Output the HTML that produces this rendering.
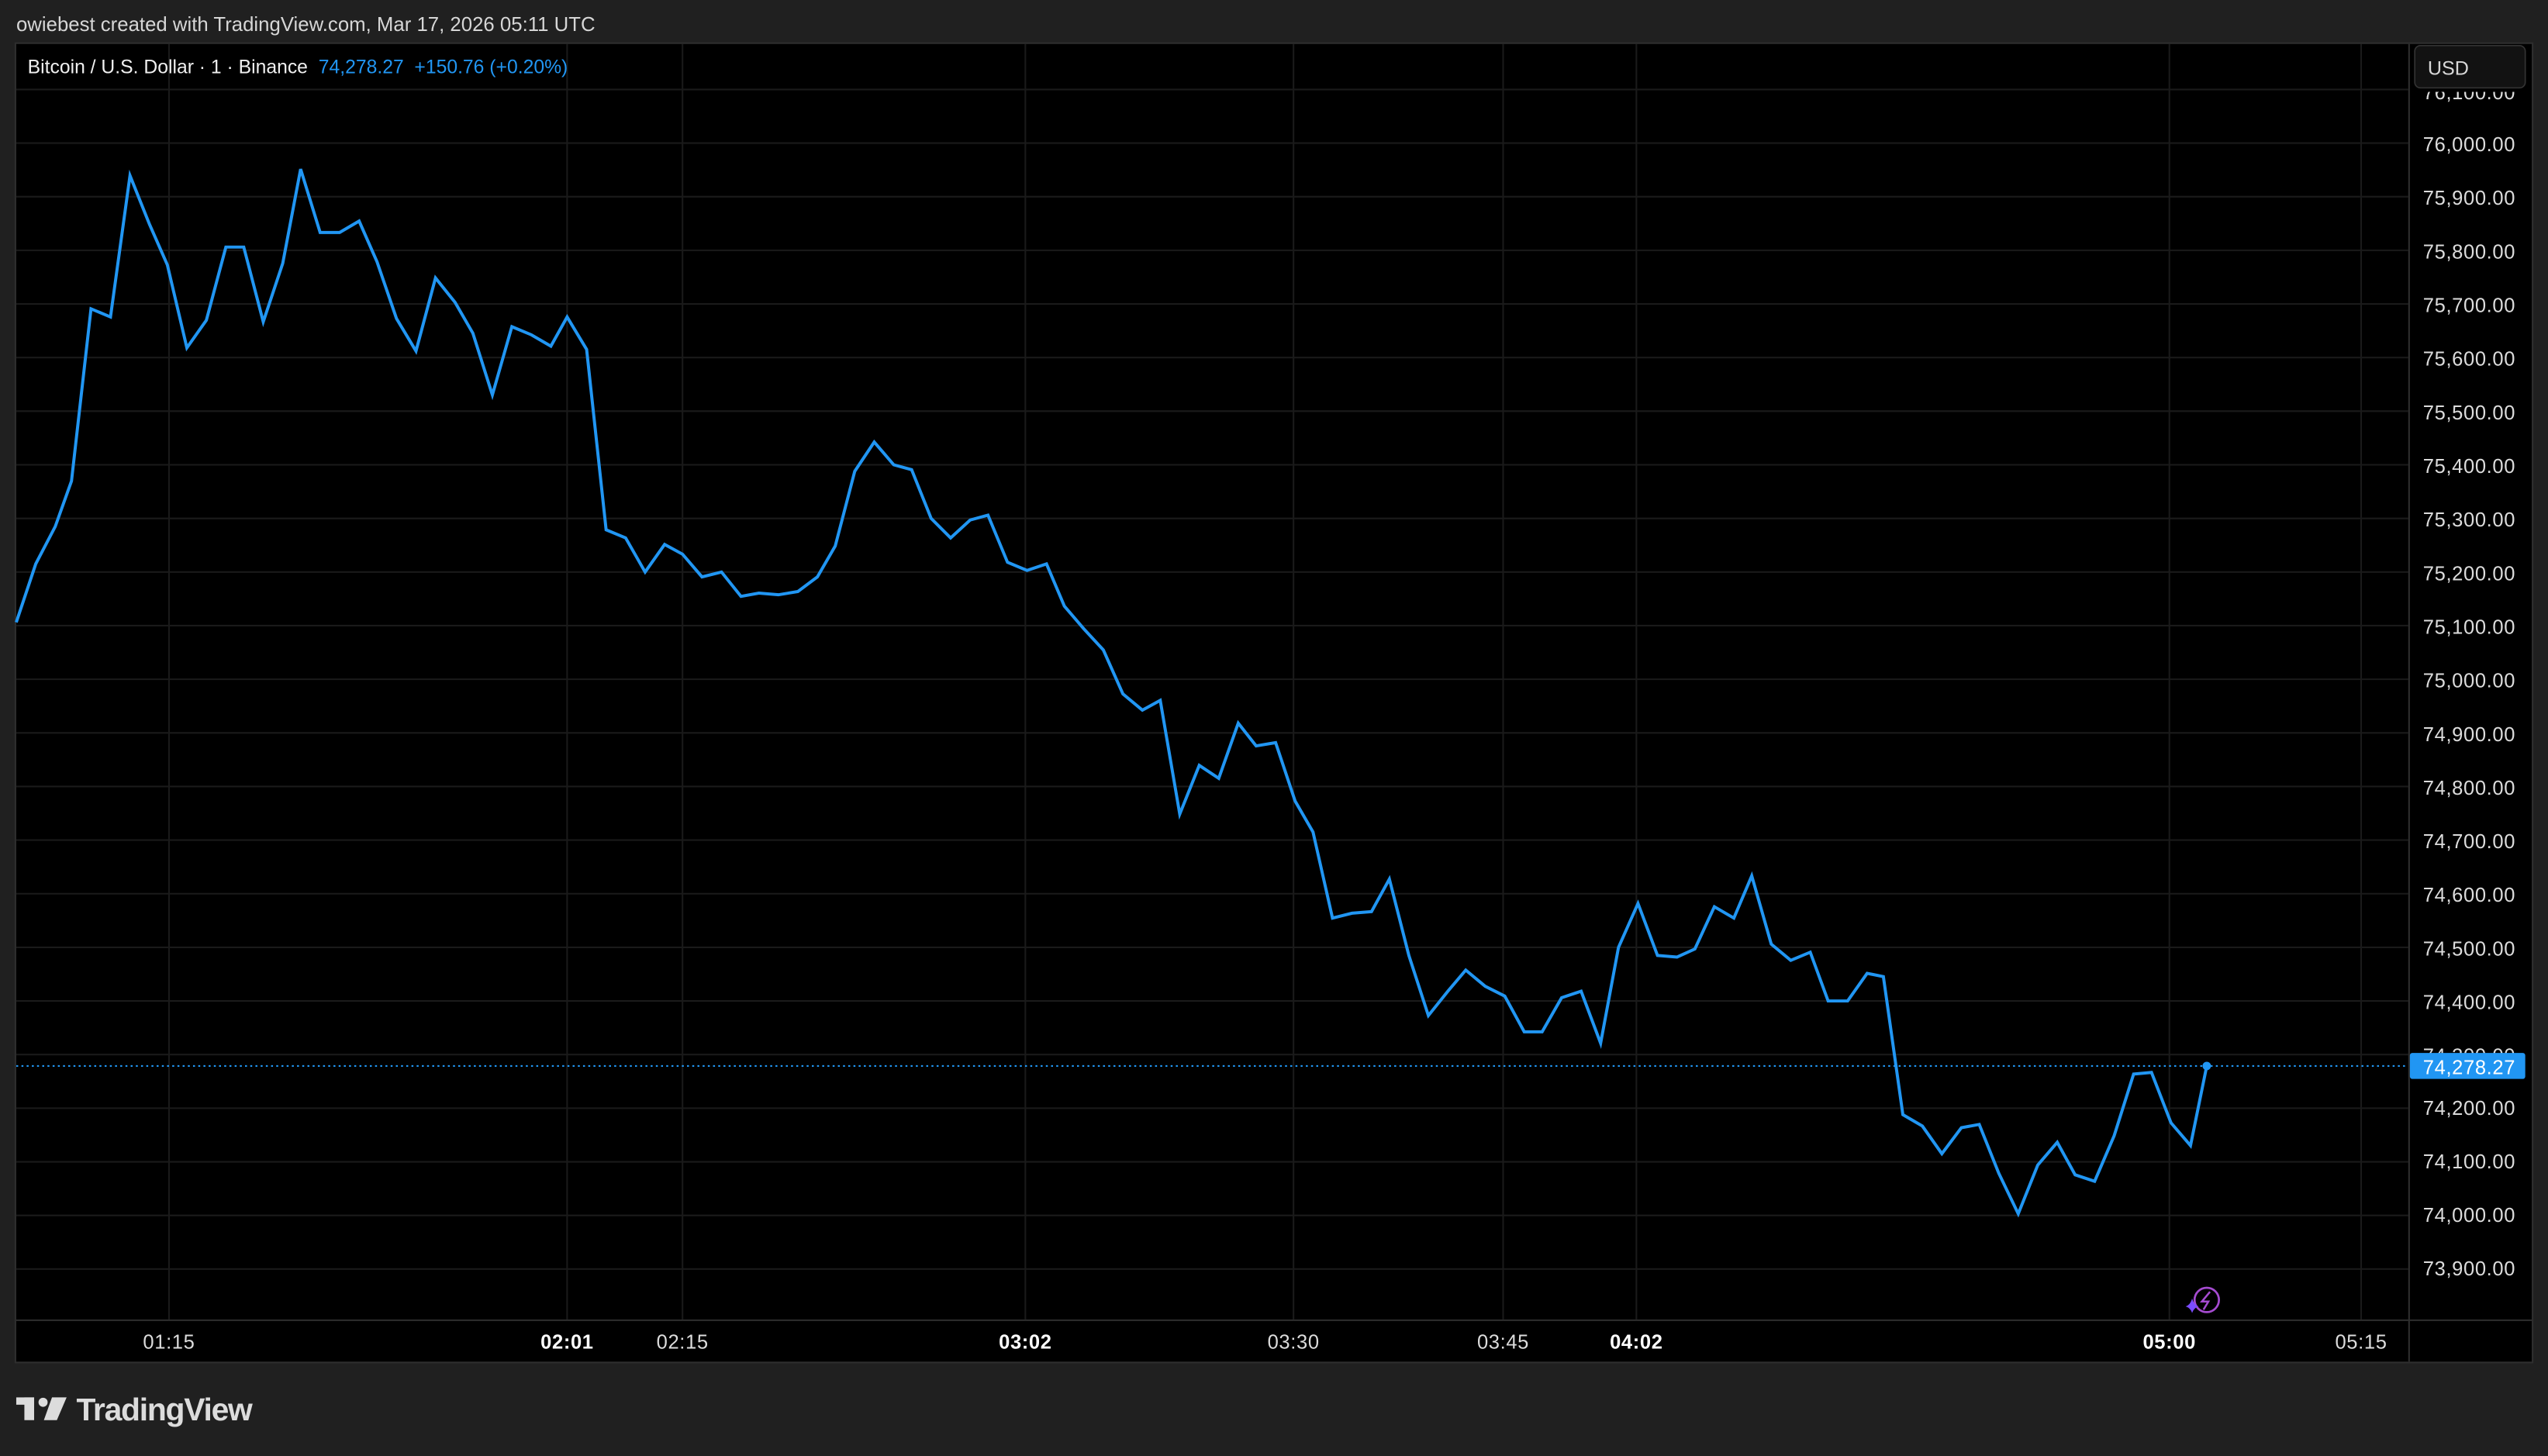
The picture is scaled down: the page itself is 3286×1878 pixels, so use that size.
<!DOCTYPE html>
<html><head><meta charset="utf-8"><style>
html,body{margin:0;padding:0;background:#202020;}
svg{display:block;}
text{font-family:"Liberation Sans",sans-serif;}
</style></head><body>
<svg width="3286" height="1878" viewBox="0 0 1568 896" xmlns="http://www.w3.org/2000/svg">
<defs><clipPath id="c1"><rect x="1483" y="56.5" width="80" height="20"/></clipPath></defs>
<rect x="0" y="0" width="1568" height="896" fill="#202020"/>
<text x="10" y="19" font-size="12.3" fill="#d6d6d6">owiebest created with TradingView.com, Mar 17, 2026 05:11 UTC</text>
<rect x="9.5" y="26.5" width="1549" height="812" fill="#000" stroke="#2e2e2e" stroke-width="1"/>
<g stroke="#1a1a1a" stroke-width="1">
<line x1="10" y1="55" x2="1482" y2="55"/>
<line x1="10" y1="88" x2="1482" y2="88"/>
<line x1="10" y1="121" x2="1482" y2="121"/>
<line x1="10" y1="154" x2="1482" y2="154"/>
<line x1="10" y1="187" x2="1482" y2="187"/>
<line x1="10" y1="220" x2="1482" y2="220"/>
<line x1="10" y1="253" x2="1482" y2="253"/>
<line x1="10" y1="286" x2="1482" y2="286"/>
<line x1="10" y1="319" x2="1482" y2="319"/>
<line x1="10" y1="352" x2="1482" y2="352"/>
<line x1="10" y1="385" x2="1482" y2="385"/>
<line x1="10" y1="418" x2="1482" y2="418"/>
<line x1="10" y1="451" x2="1482" y2="451"/>
<line x1="10" y1="484" x2="1482" y2="484"/>
<line x1="10" y1="517" x2="1482" y2="517"/>
<line x1="10" y1="550" x2="1482" y2="550"/>
<line x1="10" y1="583" x2="1482" y2="583"/>
<line x1="10" y1="616" x2="1482" y2="616"/>
<line x1="10" y1="649" x2="1482" y2="649"/>
<line x1="10" y1="682" x2="1482" y2="682"/>
<line x1="10" y1="715" x2="1482" y2="715"/>
<line x1="10" y1="748" x2="1482" y2="748"/>
<line x1="10" y1="781" x2="1482" y2="781"/>
<line x1="104" y1="27" x2="104" y2="812"/>
<line x1="349" y1="27" x2="349" y2="812"/>
<line x1="420" y1="27" x2="420" y2="812"/>
<line x1="631" y1="27" x2="631" y2="812"/>
<line x1="796" y1="27" x2="796" y2="812"/>
<line x1="925" y1="27" x2="925" y2="812"/>
<line x1="1007" y1="27" x2="1007" y2="812"/>
<line x1="1335" y1="27" x2="1335" y2="812"/>
<line x1="1453" y1="27" x2="1453" y2="812"/>
</g>
<line x1="9" y1="812.5" x2="1559" y2="812.5" stroke="#2e2e2e" stroke-width="1"/>
<line x1="1482.5" y1="27" x2="1482.5" y2="838" stroke="#2e2e2e" stroke-width="1"/>
<line x1="10" y1="656" x2="1482" y2="656" stroke="#2196f3" stroke-width="1" stroke-dasharray="1.2 2"/>
<polyline fill="none" stroke="#2196f3" stroke-width="1.9" stroke-linejoin="miter" points="10,383 22,347 34,324 44,296 56,190 68,195 80,108 92,138 103,163 115,214 127,197 139,152 150,152 162,198 174,162 185,104 197,143 209,143 221,136 232,161 244,196 256,216 268,171 280,186 291,205 303,243 315,201 327,206 339,213 349,195 361,215 373,326 385,331 397,352 409,335 420,341 432,355 444,352 456,367 467,365 479,366 491,364 503,355 514,336 526,290 538,272 550,286 561,289 573,319 585,331 597,320 608,317 620,346 632,351 644,347 655,373 667,387 679,400 691,427 703,437 714,431 726,501 738,471 750,479 762,445 773,459 785,457 797,493 808,512 820,565 832,562 844,561 855,541 867,588 879,625 891,610 902,597 914,607 926,613 938,635 949,635 961,614 973,610 985,642 996,583 1008,556 1020,588 1032,589 1043,584 1055,558 1067,565 1078,539 1090,581 1102,591 1114,586 1125,616 1137,616 1149,599 1159,601 1171,686 1183,693 1195,710 1207,694 1218,692 1230,722 1242,747 1254,717 1266,703 1277,723 1289,727 1301,699 1313,661 1324,660 1336,691 1348,705 1358,656"/>
<circle cx="1358" cy="656" r="2.6" fill="#2196f3"/>
<text x="17" y="45" font-size="11.8" fill="#f0f0f0">Bitcoin / U.S. Dollar · 1 · Binance</text>
<text x="196" y="45" font-size="11.8" fill="#2196f3">74,278.27</text>
<text x="255" y="45" font-size="11.8" fill="#2196f3">+150.76 (+0.20%)</text>
<g font-size="12.2" fill="#dcdcdc" text-anchor="end" letter-spacing="0.3">
<text x="1548" y="61" clip-path="url(#c1)">76,100.00</text>
<text x="1548" y="93">76,000.00</text>
<text x="1548" y="126">75,900.00</text>
<text x="1548" y="159">75,800.00</text>
<text x="1548" y="192">75,700.00</text>
<text x="1548" y="225">75,600.00</text>
<text x="1548" y="258">75,500.00</text>
<text x="1548" y="291">75,400.00</text>
<text x="1548" y="324">75,300.00</text>
<text x="1548" y="357">75,200.00</text>
<text x="1548" y="390">75,100.00</text>
<text x="1548" y="423">75,000.00</text>
<text x="1548" y="456">74,900.00</text>
<text x="1548" y="489">74,800.00</text>
<text x="1548" y="522">74,700.00</text>
<text x="1548" y="555">74,600.00</text>
<text x="1548" y="588">74,500.00</text>
<text x="1548" y="621">74,400.00</text>
<text x="1548" y="654">74,300.00</text>
<text x="1548" y="686">74,200.00</text>
<text x="1548" y="719">74,100.00</text>
<text x="1548" y="752">74,000.00</text>
<text x="1548" y="785">73,900.00</text>
</g>
<rect x="1486" y="28" width="68" height="26" rx="3.5" fill="#121212" stroke="#333" stroke-width="0.8"/>
<text x="1494" y="46" font-size="12" fill="#d8d8d8">USD</text>
<rect x="1483" y="648" width="71" height="16" rx="1.5" fill="#2196f3"/>
<text x="1548" y="661" font-size="12.2" fill="#fff" text-anchor="end" letter-spacing="0.3">74,278.27</text>
<g font-size="12.2" fill="#dcdcdc" text-anchor="middle" letter-spacing="0.3">
<text x="104" y="830">01:15</text>
<text x="349" y="830" font-weight="bold" fill="#fff">02:01</text>
<text x="420" y="830">02:15</text>
<text x="631" y="830" font-weight="bold" fill="#fff">03:02</text>
<text x="796" y="830">03:30</text>
<text x="925" y="830">03:45</text>
<text x="1007" y="830" font-weight="bold" fill="#fff">04:02</text>
<text x="1335" y="830" font-weight="bold" fill="#fff">05:00</text>
<text x="1453" y="830">05:15</text>
</g>
<circle cx="1358" cy="800" r="7.5" fill="#000" stroke="#a54bd0" stroke-width="1.3"/>
<path d="M1360,795 L1355,801 L1359,801 L1356,806" fill="none" stroke="#a54bd0" stroke-width="1.2"/>
<path d="M1349,799 Q1350,803 1353,804 Q1350,805 1349,808 Q1348,805 1345,804 Q1348,803 1349,799Z" fill="#7a4cff"/>
<g fill="#dcdcdc">
<rect x="10" y="860" width="11" height="4.5"/>
<rect x="15" y="860" width="6" height="14"/>
<circle cx="26.5" cy="863" r="2.8"/>
<polygon points="32,860 41,860 35,874 27,874"/>
</g>
<text x="47" y="874" font-size="19.5" font-weight="bold" fill="#dcdcdc" letter-spacing="-0.6">TradingView</text>
</svg>
</body></html>
